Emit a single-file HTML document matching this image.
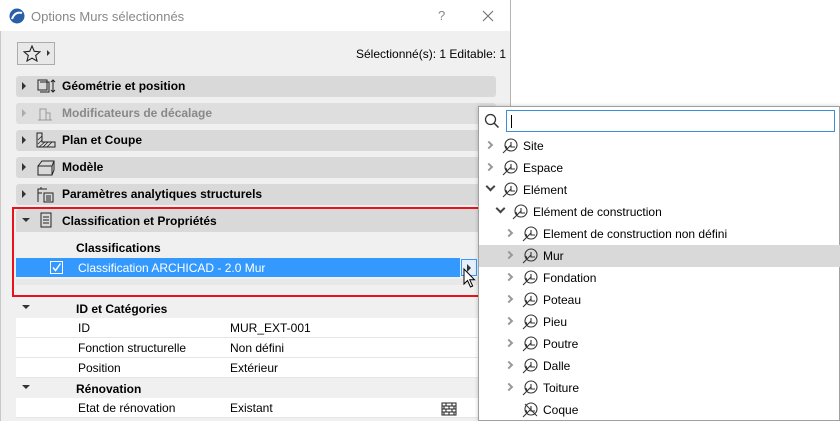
<!DOCTYPE html>
<html><head><meta charset="utf-8"><style>
*{margin:0;padding:0;box-sizing:border-box}
body{width:840px;height:421px;overflow:hidden;background:#fff;font-family:"Liberation Sans","DejaVu Sans",sans-serif;font-size:12px;color:#000;position:relative}
.a{position:absolute}
.dlg{left:0;top:0;width:511px;height:421px;background:#f0f0f0;border-right:1px solid #b5b5b5;border-left:1px solid #c8c8c8}
.title{left:0;top:0;width:510px;height:31px;background:#fff}
.sec{left:16px;width:480px;height:21px;background:#d9d9d9;border-radius:3px;font-weight:bold}
.sec span{position:absolute;left:46px;top:3px}
.tri{position:absolute;left:6px;top:6px;width:0;height:0;border-top:4px solid transparent;border-bottom:4px solid transparent;border-left:4px solid #333}
.trid{position:absolute;width:0;height:0;border-left:4px solid transparent;border-right:4px solid transparent;border-top:4px solid #333}
.row{left:16px;width:462px;height:20px;background:#fff;border-bottom:1px solid #e6e6e6}
.row span{position:absolute;top:3px}
.pop{left:478px;top:106px;width:362px;height:315px;background:#fff;border:1px solid #a0a0a0;box-shadow:0 0 4px rgba(0,0,0,.2)}
.it{position:absolute;height:22px;left:0;width:361px}
.it .t{position:absolute;top:4px}
.chev{position:absolute;top:7px;width:6px;height:6px;border-right:2px solid #999;border-bottom:2px solid #999;transform:rotate(-45deg)}
.chevd{position:absolute;top:4px;width:7px;height:7px;border-right:2px solid #444;border-bottom:2px solid #444;transform:rotate(45deg)}
</style></head><body>
<div class="a dlg"></div>
<div class="a title"></div>
<svg class="a" style="left:9px;top:8px" width="16" height="16"><circle cx="8" cy="8" r="7.5" fill="#2a5ea8"/><path d="M3 11 Q6 3 13 5" stroke="#fff" stroke-width="2" fill="none"/></svg>
<div class="a" style="left:31px;top:9px;color:#888;font-size:13px">Options Murs sélectionnés</div>
<div class="a" style="left:438px;top:8px;color:#888;font-size:13px">?</div>
<svg class="a" style="left:482px;top:10px" width="12" height="12"><path d="M1 1L11 11M11 1L1 11" stroke="#777" stroke-width="1.2"/></svg>
<div class="a" style="left:17px;top:42px;width:38px;height:23px;border:1px solid #acacac;background:#e8e8e8"></div>
<svg class="a" style="left:23px;top:45px" width="18" height="17"><path d="M9 1L11.3 6.3 17 6.8 12.7 10.5 14 16 9 13.1 4 16 5.3 10.5 1 6.8 6.7 6.3Z" fill="none" stroke="#222" stroke-width="1.1"/></svg>
<div class="a" style="left:47px;top:50px;border-top:3.5px solid transparent;border-bottom:3.5px solid transparent;border-left:3.5px solid #333"></div>
<div class="a" style="left:356px;top:47px">Sélectionné(s): 1 Editable: 1</div>

<div class="a sec" style="top:76px"><i class="tri"></i><span>Géométrie et position</span></div>
<div class="a sec" style="top:103px;color:#888;background:#dedede"><i class="tri" style="border-left-color:#aaa"></i><span>Modificateurs de décalage</span></div>
<div class="a sec" style="top:130px"><i class="tri"></i><span>Plan et Coupe</span></div>
<div class="a sec" style="top:157px"><i class="tri"></i><span>Modèle</span></div>
<div class="a sec" style="top:184px"><i class="tri"></i><span>Paramètres analytiques structurels</span></div>
<div class="a sec" style="top:209px;height:23px;border-radius:3px 3px 0 0"><i class="trid" style="left:6px;top:9px"></i><span style="top:5px">Classification et Propriétés</span></div>
<svg class="a" style="left:36px;top:78px" width="20" height="17"><rect x="2" y="2" width="9" height="10" fill="none" stroke="#222"/><path d="M4 4h9v10H4" fill="none" stroke="#222"/><path d="M17 2v12M15 4l2-2 2 2M15 12l2 2 2-2" stroke="#222" fill="none"/></svg>
<svg class="a" style="left:36px;top:105px" width="18" height="17"><path d="M4 15V4h6v11M10 8h4v7M2 15h14" stroke="#999" fill="none"/></svg>
<svg class="a" style="left:36px;top:132px" width="20" height="17"><path d="M1 1v14h18v-5H6V1z" fill="none" stroke="#222"/><path d="M2 8l4-4M2 12l4-4M3 15l6-5M7 15l5-5M11 15l5-5" stroke="#222" stroke-width=".8"/></svg>
<svg class="a" style="left:36px;top:159px" width="20" height="17"><path d="M2 7h14v9H2zM2 7l4-5h12v9l-2 5M16 7l2-5" fill="none" stroke="#222"/></svg>
<svg class="a" style="left:36px;top:186px" width="20" height="17"><path d="M2 16V3h9M5 3V1M2 7h4" fill="none" stroke="#222"/><rect x="8" y="7" width="9" height="9" fill="none" stroke="#222"/><path d="M10 10h5M10 12h5M10 14h5" stroke="#222"/></svg>
<svg class="a" style="left:40px;top:212px" width="12" height="16"><rect x="1" y="1" width="10" height="14" fill="none" stroke="#222"/><path d="M3 5h6M3 8h6M3 11h6" stroke="#222"/></svg>

<div class="a" style="left:76px;top:241px;font-weight:bold">Classifications</div>
<div class="a" style="left:16px;top:258px;width:444px;height:19px;background:#3399ff"></div>
<div class="a" style="left:50px;top:261px;width:13px;height:13px;border:1px solid #fff;background:#3399ff"></div>
<svg class="a" style="left:51px;top:262px" width="11" height="11"><path d="M2 5.5l2.5 3 5-7" stroke="#fff" stroke-width="1.5" fill="none"/></svg>
<div class="a" style="left:78px;top:261px;color:#fff">Classification ARCHICAD - 2.0 Mur</div>
<div class="a" style="left:16px;top:279px;width:462px;height:6px;background:#e8e8e8"></div>
<div class="a" style="left:461px;top:259px;width:16px;height:17px;border:1px solid #3399ff;background:#e6f0fb"></div>
<div class="a" style="left:467px;top:264px;border-top:4px solid transparent;border-bottom:4px solid transparent;border-left:4px solid #333"></div>
<svg class="a" style="left:463px;top:268px" width="14" height="21"><path d="M1 1v15l3.5-3.5 3 6.5 2.2-1-3-6.2h4.8z" fill="#fff" stroke="#000"/></svg>
<div class="a" style="left:12px;top:207px;width:468px;height:90px;border:2px solid #e8141b"></div>

<div class="a" style="left:16px;top:298px;width:462px;height:20px"><i class="trid" style="left:6px;top:7px"></i><span style="position:absolute;left:60px;top:4px;font-weight:bold">ID et Catégories</span></div>
<div class="a row" style="top:318px"><span style="left:62px">ID</span><span style="left:214px">MUR_EXT-001</span></div>
<div class="a row" style="top:338px"><span style="left:62px">Fonction structurelle</span><span style="left:214px">Non défini</span></div>
<div class="a row" style="top:358px"><span style="left:62px">Position</span><span style="left:214px">Extérieur</span></div>
<div class="a" style="left:16px;top:378px;width:462px;height:20px"><i class="trid" style="left:6px;top:7px"></i><span style="position:absolute;left:60px;top:4px;font-weight:bold">Rénovation</span></div>
<div class="a row" style="top:398px"><span style="left:62px">Etat de rénovation</span><span style="left:214px">Existant</span></div>
<svg class="a" style="left:441px;top:402px" width="16" height="14"><path d="M1 1h14v12H1zM1 4h14M1 7h14M1 10h14M5 1v3M11 1v3M3 4v3M8 4v3M13 4v3M5 7v3M11 7v3M3 10v3M8 10v3M13 10v3" stroke="#222" fill="none"/></svg>

<div class="a pop">
<svg class="a" style="left:5px;top:6px" width="16" height="16"><circle cx="6.5" cy="6.5" r="5" fill="none" stroke="#333" stroke-width="1.3"/><path d="M10 10l4.5 4.5" stroke="#333" stroke-width="1.5"/></svg>
<div class="a" style="left:27px;top:3px;width:329px;height:22px;border:1px solid #3b8fd9"></div>
<div class="a" style="left:32px;top:8px;width:1px;height:13px;background:#000"></div>
<div class="a" style="left:0;top:138px;width:361px;height:22px;background:#d9d9d9"></div>
</div>
<div id="tree" class="a" style="left:479px;top:135px;width:361px"></div>
<script>
var items=[["Site",0,"c"],["Espace",0,"c"],["Elément",0,"d"],["Elément de construction",1,"d"],["Element de construction non défini",2,"c"],["Mur",2,"c"],["Fondation",2,"c"],["Poteau",2,"c"],["Pieu",2,"c"],["Poutre",2,"c"],["Dalle",2,"c"],["Toiture",2,"c"],["Coque",2,"n"]];
var h="";items.forEach(function(it,i){var o=it[1]*10;var ch=it[2]=="c"?'<i class="chev" style="left:'+(7+o)+'px"></i>':it[2]=="d"?'<i class="chevd" style="left:'+(8+o)+'px"></i>':'';
var ic='<svg style="position:absolute;left:'+(23+o)+'px;top:3px" width="16" height="16"><circle cx="9" cy="7" r="6" fill="none" stroke="#333" stroke-width="1.1"/><path d="M1 15l8-8M9 4v5h4M5 11l-1-3" stroke="#333" stroke-width="1.1" fill="none"/>'+(it[2]=="n"?'<path d="M3 2l12 12" stroke="#333"/>':'')+'</svg>';
h+='<div class="it" style="top:'+(i*22)+'px">'+ch+ic+'<span class="t" style="left:'+(44+o)+'px">'+it[0]+'</span></div>';});
document.getElementById("tree").innerHTML=h;
</script>
</body></html>
